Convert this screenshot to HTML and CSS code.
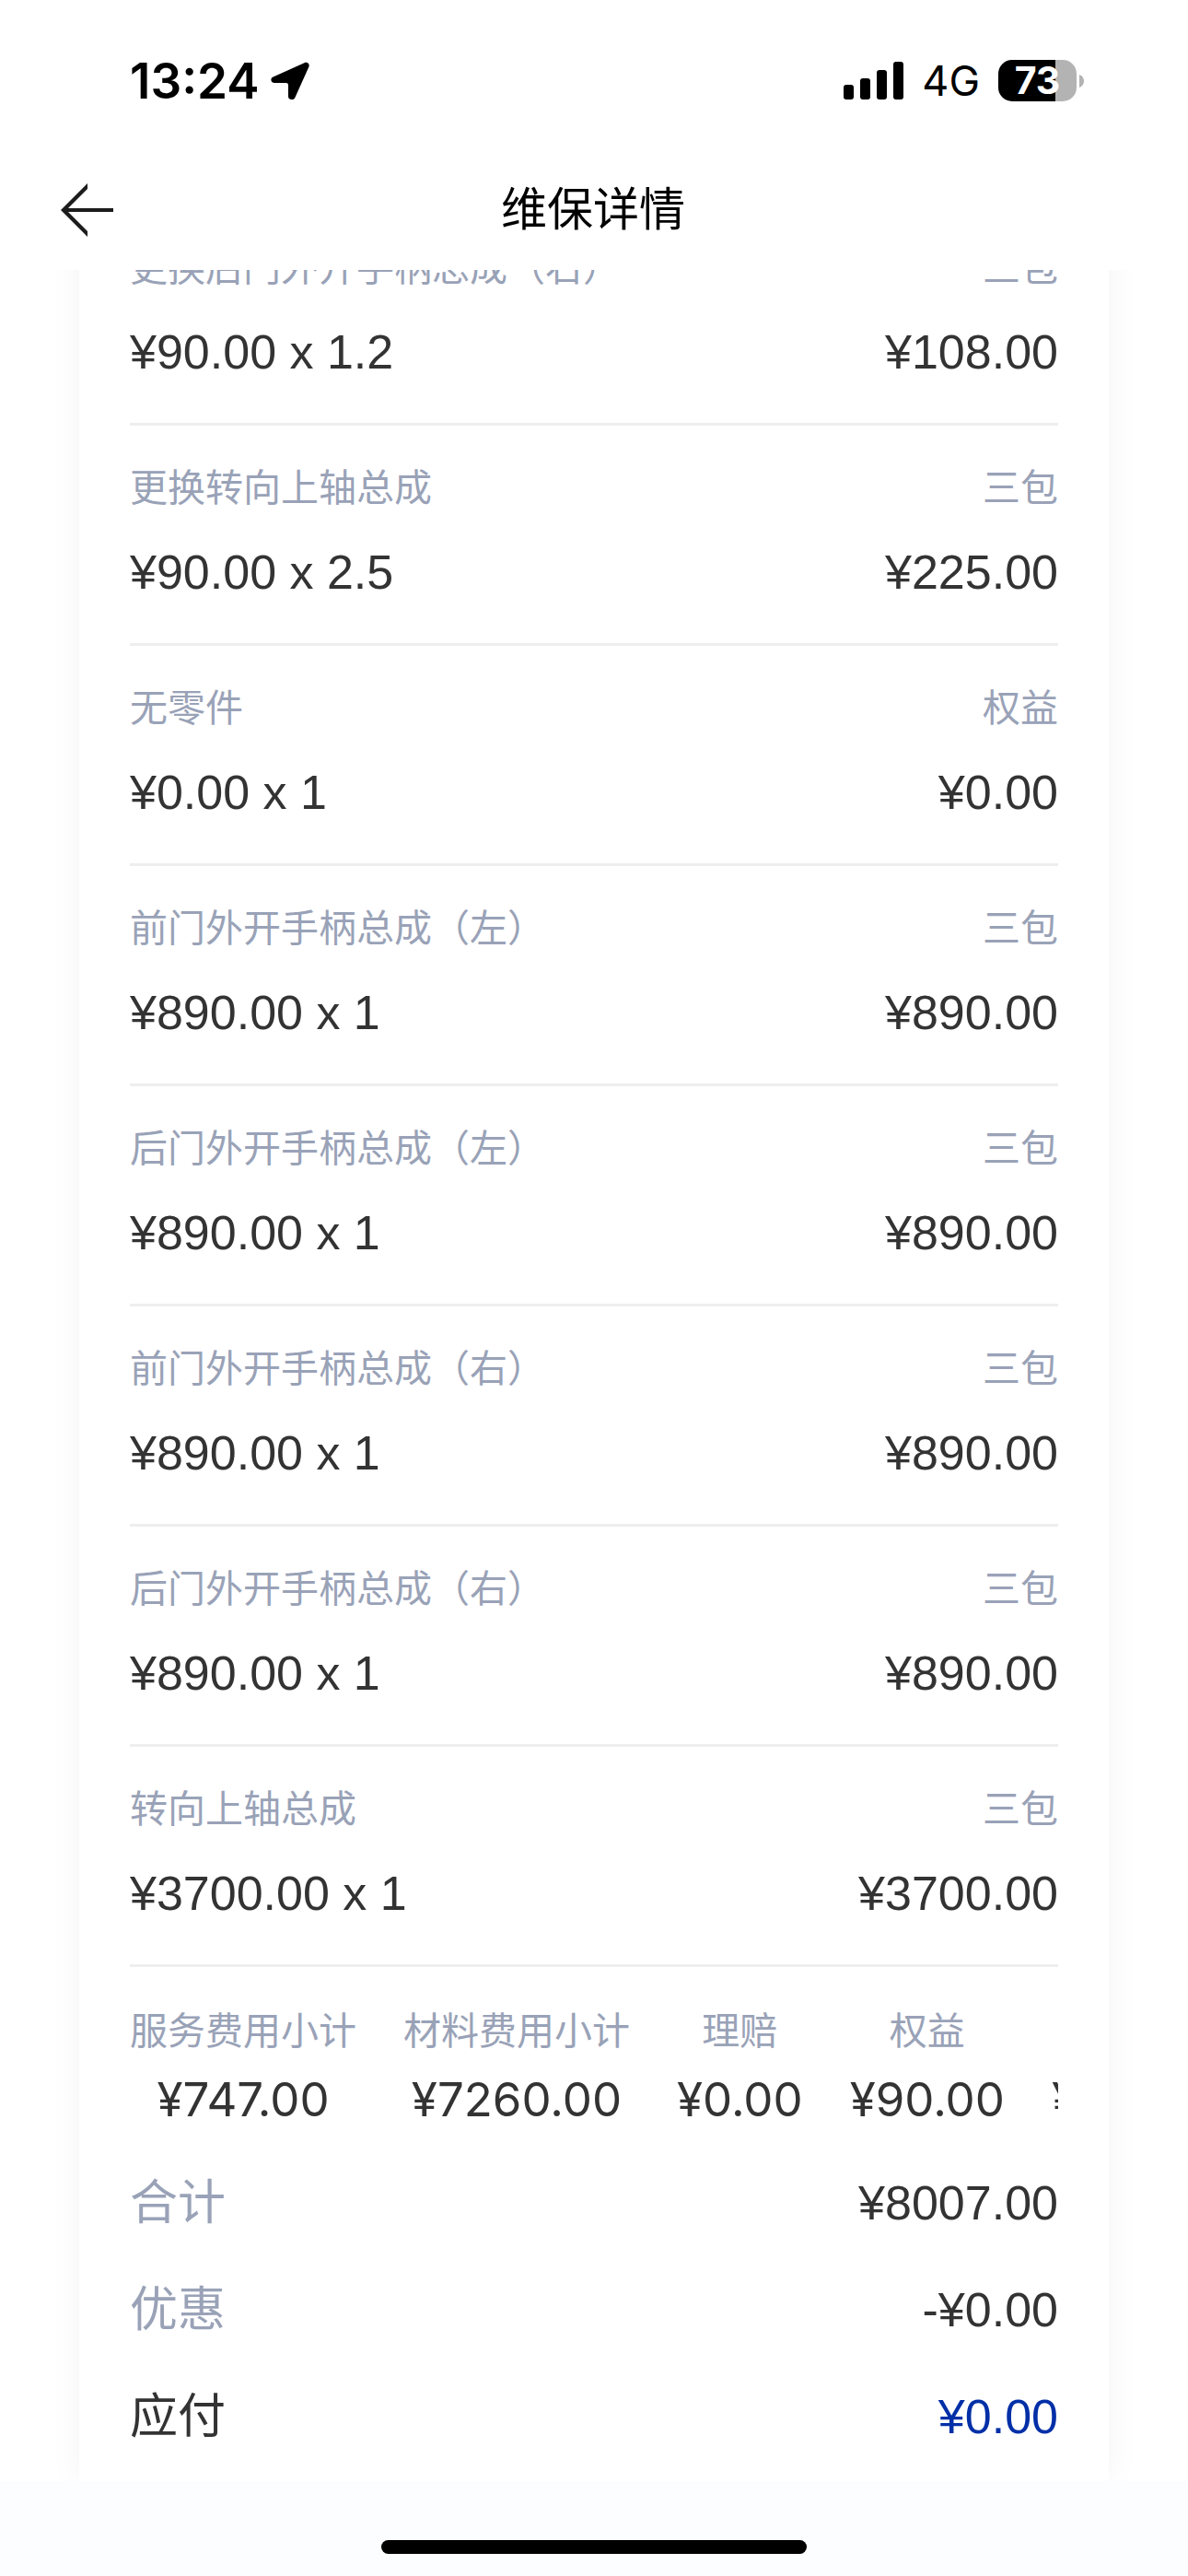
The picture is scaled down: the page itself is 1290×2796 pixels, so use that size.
FILE: index.html
```html
<!DOCTYPE html>
<html lang="zh-CN">
<head>
  <meta charset="UTF-8">
  <meta name="viewport" content="width=device-width, initial-scale=1">
  <title>维保详情</title>
  <link rel="stylesheet" href="styles.css">
</head>
<body>
  <div class="status-bar">
    <div class="status-left">
      <span class="time">13:24</span>
      <svg class="location" width="42" height="42" viewBox="0 0 42 42">
        <path d="M36.500 1.200 C39.800 -0.400 42.600 2.300 41.400 5.600 L26.200 39.200 C24.800 42.200 19 41.600 19 37.800 L19 25.500 C19 23.800 18.200 23 16.500 23 L4.200 23 C0.200 23 -1.200 18.300 2.600 16.600 Z"/>
      </svg>
    </div>
    <div class="status-right">
      <svg width="65" height="42" viewBox="0 0 65 42">
        <rect x="0" y="25" width="11" height="16" rx="3"/>
        <rect x="18" y="18" width="11" height="23" rx="3"/>
        <rect x="36" y="9" width="11" height="32" rx="3"/>
        <rect x="54" y="0" width="11" height="41" rx="3"/>
      </svg>
      <span class="network">4G</span>
      <div class="battery">
        <span class="battery-level">73</span>
        <svg class="battery-tip" width="5" height="14" viewBox="0 0 5 14"><path d="M0 0 Q5 2 5 7 Q5 12 0 14 Z"/></svg>
      </div>
    </div>
  </div>

  <header class="nav">
    <button class="back" type="button" aria-label="返回">
      <svg width="58" height="58" viewBox="0 0 58 58">
        <path d="M0 29 L29 0 V6 L8 27 H57 V31 H8 L29 52 V58 Z" fill="#1c1c1c"/>
      </svg>
    </button>
    <h1 class="title">维保详情</h1>
  </header>

  <main class="content">
    <section class="card">
      <ul class="items">
        <li class="item">
          <div class="row label"><span>更换后门外开手柄总成（右）</span><span>三包</span></div>
          <div class="row price"><span>¥90.00 x 1.2</span><span>¥108.00</span></div>
        </li>
        <li class="item">
          <div class="row label"><span>更换转向上轴总成</span><span>三包</span></div>
          <div class="row price"><span>¥90.00 x 2.5</span><span>¥225.00</span></div>
        </li>
        <li class="item">
          <div class="row label"><span>无零件</span><span>权益</span></div>
          <div class="row price"><span>¥0.00 x 1</span><span>¥0.00</span></div>
        </li>
        <li class="item">
          <div class="row label"><span>前门外开手柄总成（左）</span><span>三包</span></div>
          <div class="row price"><span>¥890.00 x 1</span><span>¥890.00</span></div>
        </li>
        <li class="item">
          <div class="row label"><span>后门外开手柄总成（左）</span><span>三包</span></div>
          <div class="row price"><span>¥890.00 x 1</span><span>¥890.00</span></div>
        </li>
        <li class="item">
          <div class="row label"><span>前门外开手柄总成（右）</span><span>三包</span></div>
          <div class="row price"><span>¥890.00 x 1</span><span>¥890.00</span></div>
        </li>
        <li class="item">
          <div class="row label"><span>后门外开手柄总成（右）</span><span>三包</span></div>
          <div class="row price"><span>¥890.00 x 1</span><span>¥890.00</span></div>
        </li>
        <li class="item">
          <div class="row label"><span>转向上轴总成</span><span>三包</span></div>
          <div class="row price"><span>¥3700.00 x 1</span><span>¥3700.00</span></div>
        </li>
      </ul>

      <div class="subtotals">
        <div class="subtotal"><span class="label">服务费用小计</span><span class="amount">¥747.00</span></div>
        <div class="subtotal"><span class="label">材料费用小计</span><span class="amount">¥7260.00</span></div>
        <div class="subtotal"><span class="label">理赔</span><span class="amount">¥0.00</span></div>
        <div class="subtotal"><span class="label">权益</span><span class="amount">¥90.00</span></div>
        <div class="subtotal"><span class="label">三包</span><span class="amount">¥7917.00</span></div>
      </div>

      <div class="totals">
        <div class="row total"><span class="muted">合计</span><span>¥8007.00</span></div>
        <div class="row total"><span class="muted">优惠</span><span>-¥0.00</span></div>
        <div class="row total"><span>应付</span><span class="due">¥0.00</span></div>
      </div>
    </section>
  </main>

  <footer class="home-area">
    <div class="home-indicator"></div>
  </footer>
</body>
</html>
```
FILE: styles.css
```css
* {
  box-sizing: border-box;
}

body {
  margin: 0;
  height: 100vh;
  display: flex;
  flex-direction: column;
  background: #fff;
  color: #333;
  font-family: "Liberation Sans", "Noto Sans CJK SC", sans-serif;
  font-size: 52px;
}

svg {
  display: block;
}

/* status bar */
.status-bar {
  display: flex;
  justify-content: space-between;
  align-items: center;
  height: 175px;
  padding: 0 113px 0 141px;
  color: #000;
  font-family: Inter, sans-serif;
}

.status-left,
.status-right {
  display: flex;
  align-items: center;
}

.status-left {
  gap: 12px;
}

.status-right {
  gap: 20px;
}

.time {
  font-weight: 600;
  font-size: 53px;
}

.network {
  font-size: 45px;
}

.battery {
  display: flex;
  align-items: center;
  gap: 3px;
}

.battery-level {
  width: 85px;
  height: 45px;
  border-radius: 15px;
  background: linear-gradient(to right, #000 73%, #b3b3b3 73%);
  color: #fff;
  font-size: 41px;
  font-weight: 700;
  line-height: 45px;
  text-align: center;
}

.battery-tip {
  fill: #b3b3b3;
}

/* title bar */
.nav {
  display: grid;
  grid-template-columns: 1fr auto 1fr;
  align-items: center;
  height: 118px;
  padding: 0 68px 12px 66px;
  color: #000;
}

.back {
  justify-self: start;
  margin: 0;
  padding: 0;
  border: 0;
  background: none;
}

.title {
  margin: 0;
  font-size: 50px;
  font-weight: 400;
  line-height: 72px;
}

/* list is scrolled to its end, the top is cut by the title bar */
.content {
  flex: 1;
  min-height: 0;
  display: flex;
  flex-direction: column;
  justify-content: flex-end;
  overflow: hidden;
  padding: 0 86px;
}

.card {
  flex-shrink: 0;
  padding: 0 55px 12px;
  background: #fff;
  box-shadow: 0 0 34px rgba(0, 0, 0, 0.05);
}

.items {
  margin: 0;
  padding: 0;
  list-style: none;
}

.item {
  display: flex;
  flex-direction: column;
  gap: 25px;
  padding: 38px 0 41px;
  border-bottom: 3px solid #eee;
}

.row {
  display: flex;
  justify-content: space-between;
  line-height: 72px;
}

.label {
  color: #99a2b7;
  font-size: 41px;
  line-height: 60px;
}

.subtotals {
  display: flex;
  gap: 51px;
  padding: 40px 0 18px;
  overflow: hidden;
}

.subtotal {
  flex-shrink: 0;
  display: flex;
  flex-direction: column;
  align-items: center;
  gap: 8px;
}

.amount {
  font-family: Inter, sans-serif;
  font-size: 51px;
  line-height: 72px;
}

.total {
  padding: 22px 0;
}

.muted {
  color: #99a2b7;
}

.due {
  color: #002fa7;
}

.home-area {
  display: flex;
  justify-content: center;
  align-items: flex-end;
  height: 103px;
  padding-bottom: 24px;
  background: #fcfdfe;
}

.home-indicator {
  width: 462px;
  height: 15px;
  border-radius: 8px;
  background: #000;
}
```
